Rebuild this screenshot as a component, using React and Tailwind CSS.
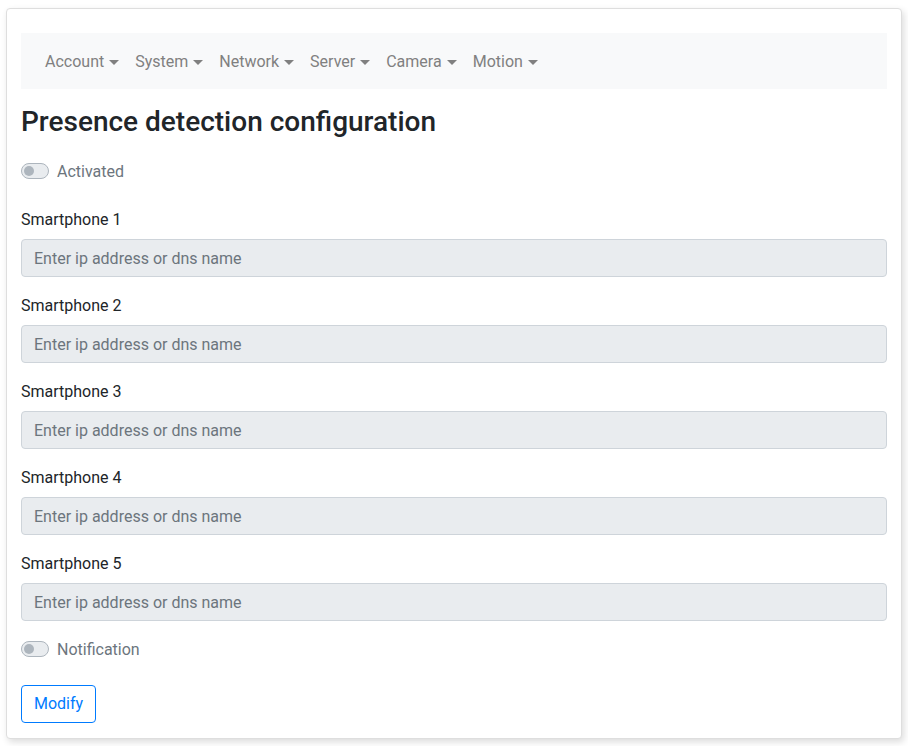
import React, { useState } from "react";

const menus = ["Account", "System", "Network", "Server", "Camera", "Motion"];

const Switch = ({ label, checked, onChange }) => (
  <label className="flex items-center h-6 cursor-pointer select-none">
    <span
      className={
        "relative w-7 h-4 rounded-full border " +
        (checked ? "bg-[#007bff] border-[#007bff]" : "bg-[#e9ecef] border-[#adb5bd]")
      }
      onClick={onChange}
    >
      <span
        className={
          "absolute top-[2px] w-[10px] h-[10px] rounded-full " +
          (checked ? "left-[14px] bg-white" : "left-[2px] bg-[#adb5bd]")
        }
      />
    </span>
    <span className="ml-2 pt-px text-[#6c757d]">{label}</span>
  </label>
);

const App = () => {
  const [activated, setActivated] = useState(false);
  const [notify, setNotify] = useState(false);

  return (
    <div
      className="min-h-screen bg-white pt-2 pl-[6px] pr-[6px] text-[16px] text-[#212529]"
      style={{ fontFamily: "Roboto, 'Liberation Sans', sans-serif" }}
    >
      <div className="w-[896px] h-[731px] bg-white border border-[#dedede] rounded-[4px] shadow-[2px_3px_7px_rgba(0,0,0,0.14)] px-[14px] pt-[24px]">
        <nav className="h-14 bg-[#f8f9fa] flex items-center px-4 pt-px">
          {menus.map((m) => (
            <button key={m} className="flex items-center px-2 text-[#808080] hover:text-[#555]">
              {m}
              <span className="ml-[5px] mt-[1px] w-0 h-0 border-l-[5px] border-r-[5px] border-t-[5px] border-l-transparent border-r-transparent border-t-[#808080]" />
            </button>
          ))}
        </nav>

        <h3 className="mt-[16px] text-[28px] font-medium leading-[34px]">
          Presence detection configuration
        </h3>

        <div className="mt-[20px] mb-[24px]">
          <Switch label="Activated" checked={activated} onChange={() => setActivated(!activated)} />
        </div>

        {[1, 2, 3, 4, 5].map((n) => (
          <div key={n} className="mb-4">
            <label className="block leading-6 mb-2 pt-px h-6">Smartphone {n}</label>
            <input
              disabled
              placeholder="Enter ip address or dns name"
              className="w-full h-[38px] px-3 rounded-[4px] border border-[#ced4da] bg-[#e9ecef] placeholder-[#6c757d] text-[#495057]"
            />
          </div>
        ))}

        <Switch label="Notification" checked={notify} onChange={() => setNotify(!notify)} />

        <button className="mt-6 h-[38px] px-3 border border-[#007bff] rounded-[4px] text-[#007bff] hover:bg-[#007bff] hover:text-white">
          Modify
        </button>
      </div>
    </div>
  );
};

export default App;
